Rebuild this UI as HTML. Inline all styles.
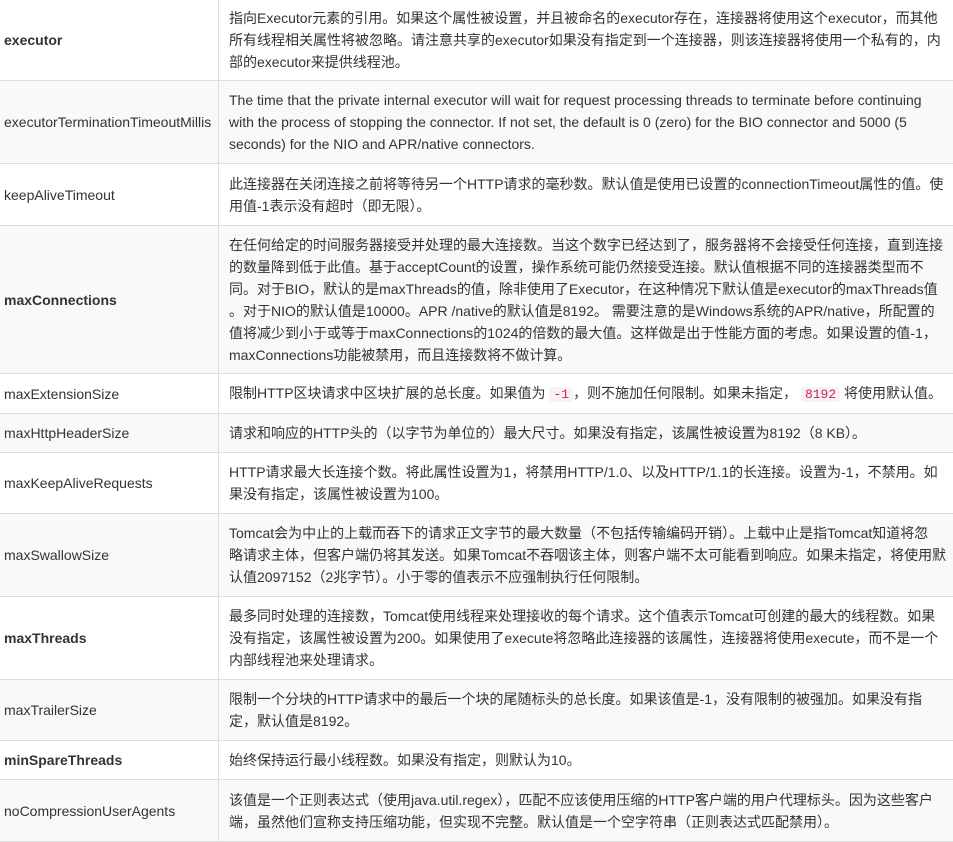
<!DOCTYPE html>
<html><head><meta charset="utf-8"><style>
html,body{margin:0;padding:0;background:#fff;width:953px;height:838px;overflow:hidden}
body{font-family:"Liberation Sans","Noto Sans CJK SC",sans-serif;font-size:14px;color:#333}
.r{position:absolute;left:0;width:953px;border-bottom:1px solid #ddd;box-sizing:border-box}
.g{background:#f9f9f9}
.k{position:absolute;left:0;top:0;bottom:0;width:219px;border-right:1px solid #ddd;display:flex;align-items:center;padding-left:4px;box-sizing:border-box;white-space:nowrap}
.v{position:absolute;left:229px;right:0;top:0;bottom:0;display:flex;flex-direction:column;justify-content:center;line-height:22px;white-space:nowrap}
b{font-weight:bold}
code{font-family:"Liberation Mono",monospace;font-size:13px;color:#c7254e;background:#f9f2f4;padding:0 4px;border-radius:3px}
</style></head><body>
<div class="r" style="top:-1px;height:82px"><div class="k"><b>executor</b></div><div class="v"><div>指向Executor元素的引用。如果这个属性被设置，并且被命名的executor存在，连接器将使用这个executor，而其他</div><div>所有线程相关属性将被忽略。请注意共享的executor如果没有指定到一个连接器，则该连接器将使用一个私有的，内</div><div>部的executor来提供线程池。</div></div></div>
<div class="r g" style="top:81px;height:83px"><div class="k">executorTerminationTimeoutMillis</div><div class="v"><div>The time that the private internal executor will wait for request processing threads to terminate before continuing</div><div>with the process of stopping the connector. If not set, the default is 0 (zero) for the BIO connector and 5000 (5</div><div>seconds) for the NIO and APR/native connectors.</div></div></div>
<div class="r" style="top:164px;height:62px"><div class="k">keepAliveTimeout</div><div class="v"><div>此连接器在关闭连接之前将等待另一个HTTP请求的毫秒数。默认值是使用已设置的connectionTimeout属性的值。使</div><div>用值-1表示没有超时（即无限）。</div></div></div>
<div class="r g" style="top:226px;height:148px"><div class="k"><b>maxConnections</b></div><div class="v"><div>在任何给定的时间服务器接受并处理的最大连接数。当这个数字已经达到了，服务器将不会接受任何连接，直到连接</div><div>的数量降到低于此值。基于acceptCount的设置，操作系统可能仍然接受连接。默认值根据不同的连接器类型而不</div><div>同。对于BIO，默认的是maxThreads的值，除非使用了Executor，在这种情况下默认值是executor的maxThreads值</div><div>。对于NIO的默认值是10000。APR /native的默认值是8192。 需要注意的是Windows系统的APR/native，所配置的</div><div>值将减少到小于或等于maxConnections的1024的倍数的最大值。这样做是出于性能方面的考虑。如果设置的值-1，</div><div>maxConnections功能被禁用，而且连接数将不做计算。</div></div></div>
<div class="r" style="top:374px;height:40px"><div class="k">maxExtensionSize</div><div class="v"><div>限制HTTP区块请求中区块扩展的总长度。如果值为 <code>-1</code>，则不施加任何限制。如果未指定， <code>8192</code> 将使用默认值。</div></div></div>
<div class="r g" style="top:414px;height:39px"><div class="k">maxHttpHeaderSize</div><div class="v"><div>请求和响应的HTTP头的（以字节为单位的）最大尺寸。如果没有指定，该属性被设置为8192（8 KB）。</div></div></div>
<div class="r" style="top:453px;height:61px"><div class="k">maxKeepAliveRequests</div><div class="v"><div>HTTP请求最大长连接个数。将此属性设置为1，将禁用HTTP/1.0、以及HTTP/1.1的长连接。设置为-1，不禁用。如</div><div>果没有指定，该属性被设置为100。</div></div></div>
<div class="r g" style="top:514px;height:83px"><div class="k">maxSwallowSize</div><div class="v"><div>Tomcat会为中止的上载而吞下的请求正文字节的最大数量（不包括传输编码开销）。上载中止是指Tomcat知道将忽</div><div>略请求主体，但客户端仍将其发送。如果Tomcat不吞咽该主体，则客户端不太可能看到响应。如果未指定，将使用默</div><div>认值2097152（2兆字节）。小于零的值表示不应强制执行任何限制。</div></div></div>
<div class="r" style="top:597px;height:83px"><div class="k"><b>maxThreads</b></div><div class="v"><div>最多同时处理的连接数，Tomcat使用线程来处理接收的每个请求。这个值表示Tomcat可创建的最大的线程数。如果</div><div>没有指定，该属性被设置为200。如果使用了execute将忽略此连接器的该属性，连接器将使用execute，而不是一个</div><div>内部线程池来处理请求。</div></div></div>
<div class="r g" style="top:680px;height:61px"><div class="k">maxTrailerSize</div><div class="v"><div>限制一个分块的HTTP请求中的最后一个块的尾随标头的总长度。如果该值是-1，没有限制的被强加。如果没有指</div><div>定，默认值是8192。</div></div></div>
<div class="r" style="top:741px;height:39px"><div class="k"><b>minSpareThreads</b></div><div class="v"><div>始终保持运行最小线程数。如果没有指定，则默认为10。</div></div></div>
<div class="r g" style="top:780px;height:62px"><div class="k">noCompressionUserAgents</div><div class="v"><div>该值是一个正则表达式（使用java.util.regex），匹配不应该使用压缩的HTTP客户端的用户代理标头。因为这些客户</div><div>端，虽然他们宣称支持压缩功能，但实现不完整。默认值是一个空字符串（正则表达式匹配禁用）。</div></div></div>
</body></html>
